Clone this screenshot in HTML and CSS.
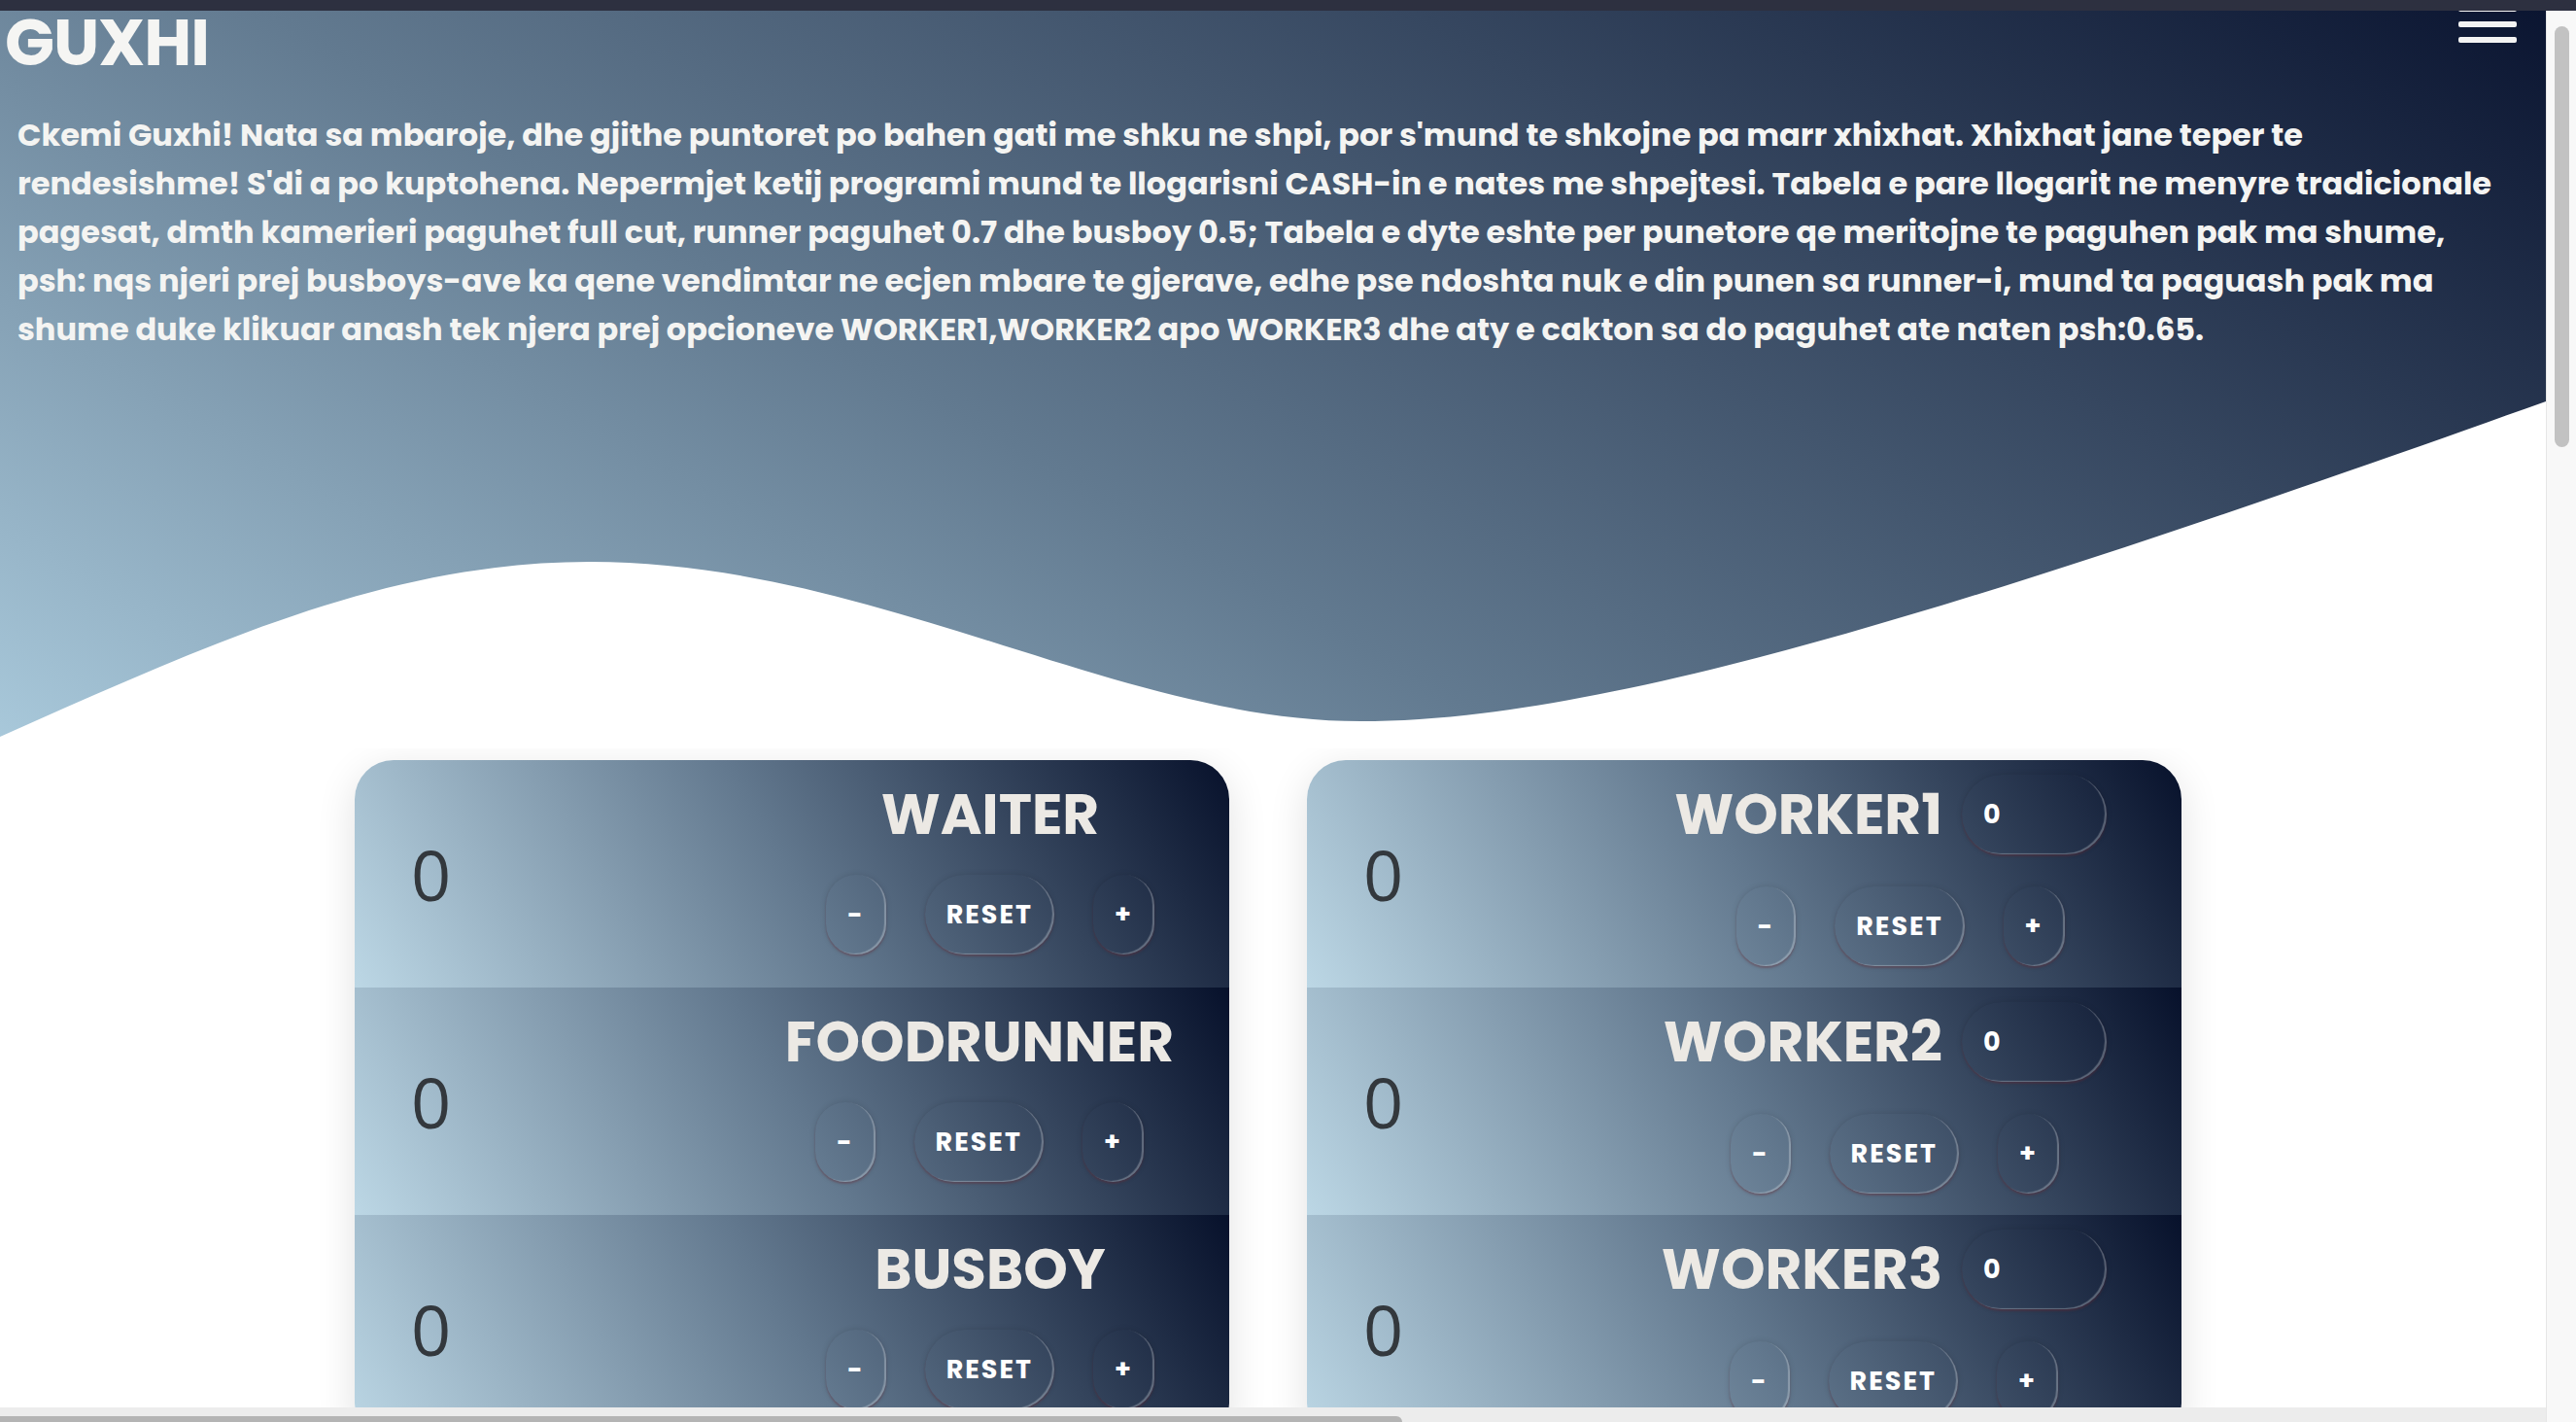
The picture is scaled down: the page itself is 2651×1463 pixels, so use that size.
FILE: index.html
```html
<!DOCTYPE html>
<html lang="sq">
<head>
  <meta charset="UTF-8">
  <title>Guxhi - Xhixhat</title>
  <link rel="stylesheet" href="styles.css">
</head>
<body>
  <div class="chrome"></div>

  <header class="hero">
    <nav class="topbar">
      <h1 class="logo">GUXHI</h1>
      <button class="burger" aria-label="Menu">
        <span></span><span></span><span></span>
      </button>
      <ul class="menu">
        <li><a href="#tabela">Tabela</a></li>
        <li><a href="#tabela">Cash</a></li>
      </ul>
    </nav>

    <p class="intro">Ckemi Guxhi! Nata sa mbaroje, dhe gjithe puntoret po bahen gati me shku ne shpi, por s'mund te shkojne pa marr xhixhat. Xhixhat jane teper te<br>rendesishme! S'di a po kuptohena. Nepermjet ketij programi mund te llogarisni CASH-in e nates me shpejtesi. Tabela e pare llogarit ne menyre tradicionale<br>pagesat, dmth kamerieri paguhet full cut, runner paguhet 0.7 dhe busboy 0.5; Tabela e dyte eshte per punetore qe meritojne te paguhen pak ma shume,<br>psh: nqs njeri prej busboys-ave ka qene vendimtar ne ecjen mbare te gjerave, edhe pse ndoshta nuk e din punen sa runner-i, mund ta paguash pak ma<br>shume duke klikuar anash tek njera prej opcioneve WORKER1,WORKER2 apo WORKER3 dhe aty e cakton sa do paguhet ate naten psh:0.65.</p>

    <svg class="wave" viewBox="0 0 2620 370" preserveAspectRatio="none">
      <path d="M0,358 C220,260 400,178 607,178 C900,178 1150,342 1400,342 C1650,342 2020,227 2620,13 L2620,370 L0,370 Z" fill="#ffffff"/>
    </svg>
  </header>

  <main class="tabelat" id="tabela">
    <section class="tabela">
      <div class="rresht">
        <span class="numri">0</span>
        <div class="kontroll">
          <h2 class="roli">WAITER</h2>
          <div class="butonat">
            <button>-</button><button>RESET</button><button>+</button>
          </div>
        </div>
      </div>
      <div class="rresht">
        <span class="numri">0</span>
        <div class="kontroll">
          <h2 class="roli">FOODRUNNER</h2>
          <div class="butonat">
            <button>-</button><button>RESET</button><button>+</button>
          </div>
        </div>
      </div>
      <div class="rresht">
        <span class="numri">0</span>
        <div class="kontroll">
          <h2 class="roli">BUSBOY</h2>
          <div class="butonat">
            <button>-</button><button>RESET</button><button>+</button>
          </div>
        </div>
      </div>
    </section>

    <section class="tabela">
      <div class="rresht">
        <span class="numri">0</span>
        <div class="kontroll">
          <div class="roli-rresht">
            <h2 class="roli">WORKER1</h2>
            <input class="pagesa" type="text" value="0">
          </div>
          <div class="butonat">
            <button>-</button><button>RESET</button><button>+</button>
          </div>
        </div>
      </div>
      <div class="rresht">
        <span class="numri">0</span>
        <div class="kontroll">
          <div class="roli-rresht">
            <h2 class="roli">WORKER2</h2>
            <input class="pagesa" type="text" value="0">
          </div>
          <div class="butonat">
            <button>-</button><button>RESET</button><button>+</button>
          </div>
        </div>
      </div>
      <div class="rresht">
        <span class="numri">0</span>
        <div class="kontroll">
          <div class="roli-rresht">
            <h2 class="roli">WORKER3</h2>
            <input class="pagesa" type="text" value="0">
          </div>
          <div class="butonat">
            <button>-</button><button>RESET</button><button>+</button>
          </div>
        </div>
      </div>
    </section>
  </main>

  <!-- shiritat e levizjes, ashtu si duken ne shfletues -->
  <div class="scroll-y"><div class="thumb"></div></div>
  <div class="scroll-x"><div class="thumb"></div></div>
</body>
</html>
```

FILE: styles.css
```css
* {
  box-sizing: border-box;
}

body {
  margin: 0 31px 0 0;
  font-family: "Poppins", "Inter", sans-serif;
  background-color: #ffffff;
}

/* barra e siperme e shfletuesit */
.chrome {
  position: fixed;
  top: 0;
  left: 0;
  right: 0;
  height: 11px;
  background-color: #2d3040;
  z-index: 10;
}

/* shiritat e levizjes */
.scroll-y {
  position: fixed;
  top: 11px;
  right: 0;
  bottom: 0;
  width: 31px;
  padding: 16px 7px 0 8px;
  background-color: #f8f8f8;
  border-left: 1px solid #e6e6e6;
  z-index: 9;
}

.scroll-y .thumb {
  height: 433px;
  border-radius: 8px;
  background-color: #c2c2c2;
}

.scroll-x {
  position: fixed;
  left: 0;
  right: 31px;
  bottom: 0;
  height: 15px;
  padding-top: 9px;
  background-color: #ececec;
  z-index: 9;
}

.scroll-x .thumb {
  width: 1443px;
  height: 100%;
  border-radius: 0 8px 0 0;
  background-color: #b4b4b4;
}

.hero {
  position: relative;
  background: linear-gradient(30deg, #a9c9db 0%, #627a90 40%, #0a1430 100%);
}

.topbar {
  display: flex;
  justify-content: space-between;
  align-items: flex-start;
  padding: 0 30px 0 5px;
}

.logo {
  margin: 11px 0 0;
  font-size: 67px;
  line-height: 65px;
  font-weight: 700;
  color: #f5f5f3;
  letter-spacing: -1px;
}

.burger {
  display: flex;
  flex-direction: column;
  gap: 10px;
  margin-top: 6px;
  padding: 0;
  border: none;
  background: none;
  cursor: pointer;
}

.burger span {
  display: block;
  width: 60px;
  height: 6px;
  border-radius: 2px;
  background-color: #f3f3f3;
}

.menu {
  display: none;
}

.intro {
  margin: 38px 0 0;
  padding: 0 18px;
  font-size: 32px;
  line-height: 50px;
  font-weight: 700;
  color: #f4f4f2;
}

.wave {
  display: block;
  width: 100%;
  height: 370px;
  margin-top: 36px;
}

/* tabelat */
.tabelat {
  display: flex;
  justify-content: center;
  gap: 80px;
  padding: 12px 10px 120px 0;
}

.tabela {
  width: 900px;
  border-radius: 40px;
  overflow: hidden;
  box-shadow: 0 10px 40px rgba(0, 0, 0, 0.12);
}

.rresht {
  display: flex;
  justify-content: space-between;
  align-items: center;
  height: 234px;
  padding: 0 57px 0 58px;
  background: linear-gradient(60deg, #bcd7e5 0%, #62788e 50%, #07112b 100%);
}

.numri {
  font-family: "Open Sans", sans-serif;
  font-size: 72px;
  font-weight: 400;
  color: #33383d;
}

.kontroll {
  display: flex;
  flex-direction: column;
  align-items: center;
}

.roli {
  margin: 0;
  font-size: 58px;
  line-height: 84px;
  font-weight: 700;
  color: #ece9e4;
}

.roli-rresht {
  display: flex;
  align-items: center;
}

.butonat {
  display: flex;
  margin: 20px 0;
}

.roli-rresht + .butonat {
  margin: 23px 0 17px;
}

.butonat button,
.pagesa {
  height: 82px;
  padding: 0 22px;
  border: none;
  border-radius: 50px;
  background: transparent;
  font-family: "Poppins", "Inter", sans-serif;
  font-size: 27px;
  font-weight: 700;
  letter-spacing: 2px;
  color: #ffffff;
  box-shadow: inset -2px -1px 1px rgba(255, 255, 255, 0.28),
              0 2px 2px rgba(110, 40, 50, 0.35),
              0 0 6px rgba(0, 0, 0, 0.12);
  cursor: pointer;
}

.butonat button {
  margin: 0 20px;
}

.pagesa {
  width: 149px;
  margin: 10px 20px;
  outline: none;
}
```
